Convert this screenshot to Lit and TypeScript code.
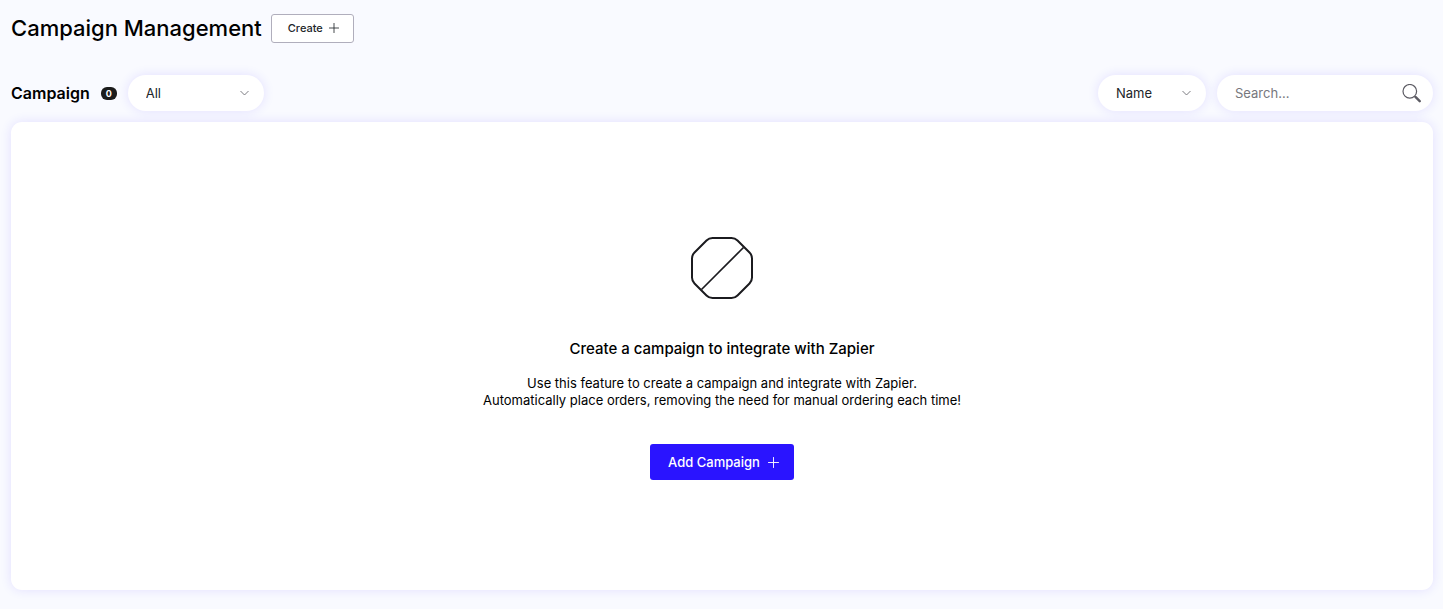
import { LitElement, html, css } from "lit";
import { customElement, property, state } from "lit/decorators.js";

const plusIcon = html`
  <svg class="plus" viewBox="0 0 12 12" aria-hidden="true">
    <path d="M6 .5v11M.5 6h11" fill="none" stroke="currentColor" stroke-linecap="round" />
  </svg>
`;

@customElement("pill-select")
export class PillSelect extends LitElement {
  @property() label = "";
  @property({ type: Array }) options: string[] = [];

  static styles = css`
    :host {
      display: block;
    }
    .field {
      display: grid;
      align-items: center;
      height: 36px;
      border-radius: 18px;
      background: #fff;
      box-shadow: 0 0 12px rgba(42, 20, 255, 0.11);
    }
    .select,
    .chevron {
      grid-area: 1 / 1;
    }
    .select {
      appearance: none;
      width: 100%;
      height: 100%;
      padding: 0 36px 0 18px;
      border: 0;
      border-radius: 18px;
      background: transparent;
      color: #212529;
      font: 400 13px/18px Inter, sans-serif;
    }
    .chevron {
      justify-self: end;
      width: 9px;
      height: 6px;
      margin-right: 15px;
      pointer-events: none;
    }
  `;

  render() {
    return html`
      <div class="field">
        <select class="select" aria-label=${this.label}>
          ${this.options.map((o) => html`<option>${o}</option>`)}
        </select>
        <svg class="chevron" viewBox="0 0 9 6" aria-hidden="true">
          <path d="M.5 1l4 4 4-4" fill="none" stroke="#6d6d75" stroke-width=".9" />
        </svg>
      </div>
    `;
  }
}

@customElement("app-root")
export class AppRoot extends LitElement {
  @state() private count = 0;

  static styles = css`
    :host {
      display: flex;
      flex-direction: column;
      box-sizing: border-box;
      min-height: 100vh;
      padding: 14px 10px 19px 11px;
      background: #f9faff;
      color: #000;
      font-family: Inter, sans-serif;
    }
    .header {
      display: flex;
      align-items: center;
      gap: 9px;
      margin-bottom: 32px;
    }
    .title,
    .heading,
    .empty-title,
    .empty-text {
      margin: 0;
    }
    .title {
      font-size: 22px;
      font-weight: 500;
      line-height: 29px;
    }
    .button {
      display: flex;
      align-items: center;
      box-sizing: border-box;
      border-radius: 3px;
      font-family: inherit;
      font-weight: 500;
      cursor: pointer;
    }
    .create {
      gap: 6px;
      height: 29px;
      padding: 0 14px 2px 16px;
      border: 1px solid #b0aebc;
      background: #fff;
      color: #212529;
      font-size: 11px;
    }
    .plus {
      width: 10px;
      height: 10px;
    }
    .toolbar {
      display: flex;
      align-items: center;
      gap: 11px;
      margin-bottom: 11px;
    }
    .heading {
      font-size: 16px;
      font-weight: 600;
      line-height: 20px;
    }
    .badge {
      width: 16px;
      border-radius: 6px;
      background: #1b1b1b;
      color: #fff;
      font-size: 9px;
      font-weight: 700;
      line-height: 13px;
      text-align: center;
    }
    .filter {
      width: 136px;
    }
    .sort {
      width: 108px;
      margin-left: auto;
    }
    .search {
      display: flex;
      align-items: center;
      box-sizing: border-box;
      width: 216px;
      height: 36px;
      padding: 0 12px 0 18px;
      border-radius: 18px;
      background: #fff;
      box-shadow: 0 0 12px rgba(42, 20, 255, 0.11);
    }
    .search-input {
      flex: 1;
      min-width: 0;
      padding: 0;
      border: 0;
      outline: 0;
      background: transparent;
      color: #212529;
      font: 400 13px/18px Inter, sans-serif;
    }
    .search-input::placeholder {
      color: #77777d;
      opacity: 1;
    }
    .search-button {
      display: flex;
      padding: 0;
      border: 0;
      background: transparent;
      color: #5c5b63;
      cursor: pointer;
    }
    .search-icon {
      width: 19px;
      height: 19px;
    }
    .card {
      display: flex;
      flex: 1;
      flex-direction: column;
      align-items: center;
      justify-content: center;
      padding: 20px 16px 16px;
      border-radius: 11px;
      background: #fff;
      box-shadow: 0 0 12px rgba(42, 20, 255, 0.11);
      text-align: center;
    }
    .empty-icon {
      width: 64px;
      height: 64px;
      margin-bottom: 39px;
    }
    .empty-title {
      margin-bottom: 16px;
      font-size: 15px;
      font-weight: 500;
      line-height: 20px;
    }
    .empty-text {
      margin-bottom: 35px;
      font-size: 13px;
      line-height: 17px;
    }
    .add {
      gap: 8px;
      height: 36px;
      padding: 0 15px 0 18px;
      border: 0;
      background: #2a14ff;
      color: #fff;
      font-size: 13px;
    }
    .add .plus {
      width: 11px;
      height: 11px;
    }
  `;

  render() {
    return html`
      <header class="header">
        <h1 class="title">Campaign Management</h1>
        <button class="button create" type="button">Create ${plusIcon}</button>
      </header>
      <div class="toolbar">
        <h2 class="heading">Campaign</h2>
        <span class="badge">${this.count}</span>
        <pill-select class="filter" label="Filter campaigns" .options=${["All"]}></pill-select>
        <pill-select class="sort" label="Sort by" .options=${["Name"]}></pill-select>
        <div class="search" role="search">
          <input class="search-input" type="text" aria-label="Search" placeholder="Search..." />
          <button class="search-button" type="button" aria-label="Search">
            <svg class="search-icon" viewBox="0 0 19 19" fill="none" stroke="currentColor" aria-hidden="true">
              <circle cx="7.8" cy="7.3" r="6.8" stroke-width="1.2" />
              <path d="M12.7 12.200l1.300 1.300" stroke-width="1.4" />
              <path d="M13.700 13.200l4 4" stroke-width="2.4" stroke-linecap="round" />
            </svg>
          </button>
        </div>
      </div>
      <main class="card">
        <svg class="empty-icon" viewBox="0 0 64 64" fill="none" stroke="#1b1b1f" aria-hidden="true">
          <path
            stroke-width="2"
            d="M22.5 2h19q3.5 0 6 2.5l12 12q2.5 2.5 2.5 6v19q0 3.5-2.5 6l-12 12q-2.5 2.5-6 2.5h-19q-3.5 0-6-2.5l-12-12q-2.5-2.5-2.5-6v-19q0-3.5 2.5-6l12-12q2.5-2.5 6-2.5z"
          />
          <path stroke-width="1.7" d="M11.500 53.500l42-42" />
        </svg>
        <h3 class="empty-title">Create a campaign to integrate with Zapier</h3>
        <p class="empty-text">
          Use this feature to create a campaign and integrate with Zapier.<br />
          Automatically place orders, removing the need for manual ordering each time!
        </p>
        <button class="button add" type="button">Add Campaign ${plusIcon}</button>
      </main>
    `;
  }
}
